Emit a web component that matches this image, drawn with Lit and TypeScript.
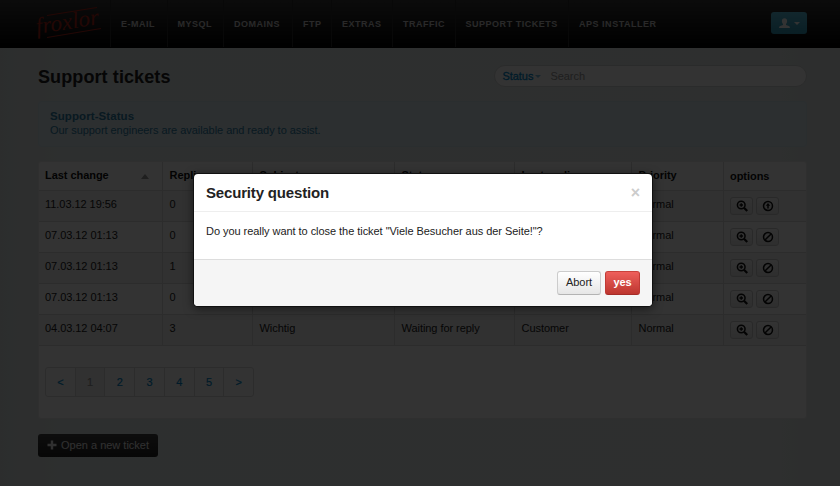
import { LitElement, html, css, svg } from "lit";
import { customElement } from "lit/decorators.js";

const NAV: [string, number][] = [
  ["E-mail", 56.5], ["MySQL", 56.5], ["Domains", 69], ["FTP", 39],
  ["Extras", 61], ["Traffic", 62.5], ["Support Tickets", 113.5], ["APS Installer", 100],
];

const TICKETS = [
  ["11.03.12 19:56", "0", "", "", "", "Normal", "up"],
  ["07.03.12 01:13", "0", "", "", "", "Normal", "ban"],
  ["07.03.12 01:13", "1", "", "", "", "Normal", "ban"],
  ["07.03.12 01:13", "0", "", "", "", "Normal", "ban"],
  ["04.03.12 04:07", "3", "Wichtig", "Waiting for reply", "Customer", "Normal", "ban"],
];

const icons: Record<string, unknown> = {
  zoom: svg`<circle cx="4.8" cy="4.6" r="3.500" fill="none" stroke="currentColor" stroke-width="1.400"/><path d="M7.300 7.100l3 3" stroke="currentColor" stroke-width="2"/><path d="M3.200 4.600h3.200M4.800 3v3.200" stroke="currentColor" stroke-width="1.200"/>`,
  ban: svg`<circle cx="5.500" cy="5.500" r="4.100" fill="none" stroke="currentColor" stroke-width="1.400"/><path d="M2.700 8.300l5.600-5.600" stroke="currentColor" stroke-width="1.400"/>`,
  up: svg`<circle cx="5.500" cy="5.500" r="4.100" fill="none" stroke="currentColor" stroke-width="1.400"/><path d="M5.500 2.700l2 2.500H6.200v2.700H4.800V5.200H3.500z" fill="currentColor"/>`,
};

@customElement("app-root")
export class AppRoot extends LitElement {
  static styles = css`
    :host { display: block; position: relative; width: 840px; height: 486px; overflow: hidden;
      background: linear-gradient(90deg, #dce2e2, #e2e9e8 60px, #e3e9e8 780px, #dee3e3);
      font: 11px/16px "Liberation Sans", Arial, sans-serif; letter-spacing: -0.05px; color: #222; }
    * { box-sizing: border-box; }
    svg { display: block; }
    .bar { display: flex; height: 48px; background: linear-gradient(#3a3a3a, #000); padding-left: 32px; border-bottom: 1px solid #000; }
    .logo { width: 78px; height: 47px; flex: none; }
    .logo text { font: italic 23px "Liberation Serif", serif; letter-spacing: 0.1px; }
    .nav { display: flex; flex: 1; }
    .nav a { border-left: 1px solid #2c2c2c; padding: 17px 0 0 10px; font: bold 9px/14px "Liberation Sans", Arial, sans-serif;
      letter-spacing: 0.52px; color: #ccc; text-transform: uppercase; white-space: nowrap; }
    .user { width: 36px; height: 22px; margin: 12px 33px 0 0; border-radius: 3px; display: flex; align-items: center; padding-left: 8px; gap: 4px;
      background: linear-gradient(#5bc0de, #2f96b4); color: #fff; }
    .caret { border: 3px solid transparent; border-top-color: currentColor; border-bottom: 0; }
    .main { padding: 17px 33px 0 38px; }
    .head { display: flex; justify-content: space-between; align-items: flex-start; }
    h1 { margin: 0; font-size: 18px; line-height: 24px; letter-spacing: 0.1px; color: #222; }
    .search { display: flex; align-items: center; width: 313px; height: 22px; border: 1px solid #d2d6d6; border-radius: 11px; background: #fff; padding: 0 0 1px 7.5px; color: #999; }
    .search b { color: #0088cc; font-weight: normal; -webkit-text-stroke: 0.3px; }
    .search .caret { margin: 1px 9px 0 2px; color: #7bbcdc; }
    .alert { margin-top: 12px; height: 46px; border: 1px solid #d3e4eb; border-radius: 3px; background: #d9e8f0; padding: 7px 11px; line-height: 14px; color: #2f7fa5; }
    .alert b { display: block; font-size: 11.5px; letter-spacing: 0.08px; }
    .panel { margin-top: 14px; height: 258px; border: 1px solid #e9e9e9; border-radius: 3px; background: #fff; }
    .row { display: grid; grid-template-columns: 123px 90px 142px 120px 117px 92px 1fr; height: 31px; border-bottom: 1px solid #dcdcdc; }
    .row.top { height: 29px; font-weight: bold; color: #111; }
    .row.odd { background: #f2f2f2; }
    .cell { border-left: 1px solid #dcdcdc; padding: 5px 0 0 6.5px; }
    .cell:first-child { border-left: 0; padding-left: 6px; }
    .row .cell:last-child { padding: 6px 0 0 6px; }
    .sorted { display: flex; justify-content: space-between; padding-right: 13px; }
    .tri { border: 4px solid transparent; border-bottom: 5px solid #999; border-top: 0; margin-top: 7px; height: 0; }
    .opts { display: flex; gap: 3px; }
    .mini { width: 23px; height: 18px; border: 1px solid #ccc; border-radius: 3px; background: linear-gradient(#fff, #e6e6e6); color: #111;
      display: flex; align-items: center; justify-content: center; }
    .pages { display: flex; width: 209px; height: 30px; margin: 21px 0 0 6px; border: 1px solid #dcdcdc; border-radius: 3px; }
    .pages a { flex: 1; text-align: center; line-height: 28px; color: #0088cc; -webkit-text-stroke: 0.2px; border-left: 1px solid #dcdcdc; }
    .pages a:first-child { border: 0; }
    .pages a.on { background: #f3f3f3; color: #999; }
    .new { margin-top: 15px; width: 120px; height: 23px; display: flex; align-items: center; gap: 4px; padding: 0 0 1px 9px; border-radius: 3px;
      background: linear-gradient(#444, #222); color: #eee; letter-spacing: 0; }
    .shade { position: absolute; inset: 0; background: rgba(0, 0, 0, 0.8); }
    .modal { position: absolute; left: 194px; top: 174px; width: 458px; height: 132px; border-radius: 4px; background: #fff; overflow: hidden;
      display: flex; flex-direction: column; }
    .ring { position: absolute; left: 193px; top: 173px; width: 460px; height: 134px; border-radius: 5px; background: #111; box-shadow: 0 2px 10px rgba(0,0,0,.5); }
    .mh { height: 38px; border-bottom: 1px solid #eee; padding: 8px 12px; display: flex; justify-content: space-between; }
    h3 { margin: 0; font-size: 15px; line-height: 22px; letter-spacing: -0.17px; color: #222; }
    .x { font: bold 16px/22px "Liberation Sans", sans-serif; color: #ccc; }
    .mb { flex: 1; padding: 11px 12px; }
    .mf { height: 47px; border-top: 1px solid #ddd; background: #f5f5f5; display: flex; justify-content: flex-end; gap: 4px; padding: 11px 12px; }
    .btn { height: 24px; border: 1px solid #ccc; border-bottom-color: #b3b3b3; border-radius: 3px; background: linear-gradient(#fff, #e6e6e6); line-height: 21px; text-align: center; width: 44px; }
    .btn.red { width: 35px; border-color: #c9423c #c03a35 #a52c28; background: linear-gradient(#ee5f5b, #bd362f); color: #fff; font-weight: bold; }
  `;

  render() {
    return html`
      <div class="bar">
        <svg class="logo" viewBox="0 0 78 47">
          <g stroke="#b02418" stroke-width="1" fill="none"><path d="M15 15.500L65 7.500M15 37.500L69 28.500"/></g>
          <text x="5" y="34" fill="#b02418" transform="rotate(-9 5 34)">froxlor</text>
        </svg>
        <nav class="nav">${NAV.map(([n, w]) => html`<a style="width:${w}px">${n}</a>`)}</nav>
        <div class="user">
          <svg width="11" height="11" viewBox="0 0 11 11"><path fill="currentColor" d="M5.500 .3C7.200 .3 8.100 1.400 8.100 3c0 1.200-.5 2.400-1.100 3v1l2.900 1.100c.7.300 1 .8 1 2H.1c0-1.200.3-1.700 1-2L4 7V6C3.400 5.400 2.900 4.200 2.900 3 2.900 1.400 3.800 .3 5.500.3z"/></svg>
          <span class="caret"></span>
        </div>
      </div>
      <div class="main">
        <div class="head"><h1>Support tickets</h1>
          <div class="search"><b>Status</b><span class="caret"></span>Search</div></div>
        <div class="alert"><b>Support-Status</b>Our support engineers are available and ready to assist.</div>
        <div class="panel">
          <div class="row top">
            <div class="cell sorted">Last change<span class="tri"></span></div>
            ${["Replies", "Subject", "Status", "Last replier", "Priority", "options"].map((t) => html`<div class="cell">${t}</div>`)}
          </div>
          ${TICKETS.map((t, i) => html`<div class="row ${i % 2 ? "" : "odd"}">
            ${t.slice(0, 6).map((v) => html`<div class="cell">${v}</div>`)}
            <div class="cell opts">
              <span class="mini"><svg width="12" height="12" viewBox="0 0 11 11">${icons.zoom}</svg></span>
              <span class="mini"><svg width="12" height="12" viewBox="0 0 11 11">${icons[t[6]]}</svg></span>
            </div></div>`)}
          <div class="pages">${["<", "1", "2", "3", "4", "5", ">"].map((p) => html`<a class=${p === "1" ? "on" : ""}>${p}</a>`)}</div>
        </div>
        <div class="new"><svg width="10" height="10" viewBox="0 0 10 10"><path d="M5 .5v9M.5 5h9" stroke="currentColor" stroke-width="2.400"/></svg>Open a new ticket</div>
      </div>
      <div class="shade"></div>
      <div class="ring"></div>
      <div class="modal">
        <div class="mh"><h3>Security question</h3><span class="x">×</span></div>
        <div class="mb">Do you really want to close the ticket "Viele Besucher aus der Seite!"?</div>
        <div class="mf"><span class="btn">Abort</span><span class="btn red">yes</span></div>
      </div>`;
  }
}
